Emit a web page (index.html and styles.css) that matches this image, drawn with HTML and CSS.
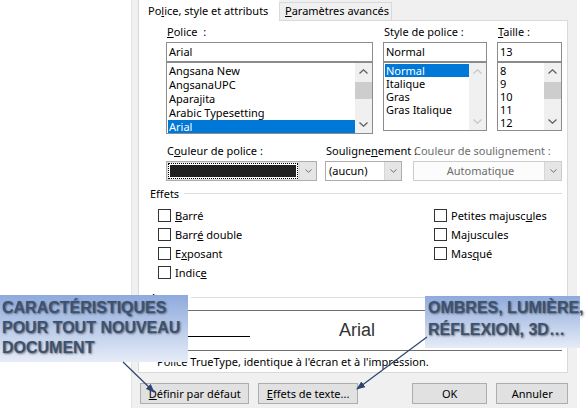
FILE: index.html
```html
<!DOCTYPE html>
<html lang="fr">
<head>
    <meta charset="UTF-8">
    <title>Police</title>
    <link rel="stylesheet" href="styles.css">
</head>
<body>
<div class="page">
    <div class="dialog">
        <div class="tabs">
            <div class="tab active">Po<u>l</u>ice, style et attributs</div>
            <div class="tab"><u>P</u>aramètres avancés</div>
        </div>

        <div class="panel">
            <div class="font-row">
                <div class="col col-font">
                    <span class="lbl"><u>P</u>olice&nbsp; :</span>
                    <div class="field">Arial</div>
                    <div class="list font-list">
                        <ul>
                            <li>Angsana New</li>
                            <li>AngsanaUPC</li>
                            <li>Aparajita</li>
                            <li>Arabic Typesetting</li>
                            <li class="sel">Arial</li>
                        </ul>
                        <div class="scroll">
                            <span class="arr"><svg width="9" height="5" viewBox="0 0 9 5"><path d="M0.5 4.5 L4.5 0.8 L8.5 4.5" fill="none" stroke="#606060" stroke-width="1.3"/></svg></span>
                            <span class="thumb"></span>
                            <span class="fill"></span>
                            <span class="arr"><svg width="9" height="5" viewBox="0 0 9 5"><path d="M0.5 0.5 L4.5 4.2 L8.5 0.5" fill="none" stroke="#606060" stroke-width="1.3"/></svg></span>
                        </div>
                    </div>
                </div>
                <div class="col col-style">
                    <span class="lbl">Style de police :</span>
                    <div class="field">Normal</div>
                    <div class="list short-list">
                        <ul>
                            <li class="sel">Normal</li>
                            <li>Italique</li>
                            <li>Gras</li>
                            <li>Gras Italique</li>
                        </ul>
                        <div class="scroll off">
                            <span class="arr"><svg width="9" height="5" viewBox="0 0 9 5"><path d="M0.5 4.5 L4.5 0.8 L8.5 4.5" fill="none" stroke="#c8c8c8" stroke-width="1.3"/></svg></span>
                            <span class="fill"></span>
                            <span class="arr"><svg width="9" height="5" viewBox="0 0 9 5"><path d="M0.5 0.5 L4.5 4.2 L8.5 0.5" fill="none" stroke="#c8c8c8" stroke-width="1.3"/></svg></span>
                        </div>
                    </div>
                </div>
                <div class="col col-size">
                    <span class="lbl"><u>T</u>aille :</span>
                    <div class="field">13</div>
                    <div class="list short-list">
                        <ul>
                            <li>8</li>
                            <li>9</li>
                            <li>10</li>
                            <li>11</li>
                            <li>12</li>
                        </ul>
                        <div class="scroll">
                            <span class="arr"><svg width="9" height="5" viewBox="0 0 9 5"><path d="M0.5 4.5 L4.5 0.8 L8.5 4.5" fill="none" stroke="#606060" stroke-width="1.3"/></svg></span>
                            <span class="thumb"></span>
                            <span class="fill"></span>
                            <span class="arr"><svg width="9" height="5" viewBox="0 0 9 5"><path d="M0.5 0.5 L4.5 4.2 L8.5 0.5" fill="none" stroke="#606060" stroke-width="1.3"/></svg></span>
                        </div>
                    </div>
                </div>
            </div>

            <div class="combo-row">
                <div class="cb cb-color">
                    <span class="lbl">C<u>o</u>uleur de police :</span>
                    <div class="combo grey">
                        <div class="focus"><div class="swatch"></div></div>
                        <span class="drop"><svg width="7" height="4" viewBox="0 0 7 4"><path d="M0.5 0.5 L3.5 3.3 L6.5 0.5" fill="none" stroke="#707070"/></svg></span>
                    </div>
                </div>
                <div class="cb cb-under">
                    <span class="lbl">Souligne<u>n</u>ement :</span>
                    <div class="combo">
                        <span class="val">(aucun)</span>
                        <span class="drop"><svg width="7" height="4" viewBox="0 0 7 4"><path d="M0.5 0.5 L3.5 3.3 L6.5 0.5" fill="none" stroke="#707070"/></svg></span>
                    </div>
                </div>
                <div class="cb cb-ucolor">
                    <span class="lbl dim">Couleur de soulignement :</span>
                    <div class="combo off">
                        <span class="val">Automatique</span>
                        <span class="drop"><svg width="7" height="4" viewBox="0 0 7 4"><path d="M0.5 0.5 L3.5 3.3 L6.5 0.5" fill="none" stroke="#707070"/></svg></span>
                    </div>
                </div>
            </div>

            <div class="group-title">Effets<span class="rule"></span></div>
            <div class="effects">
                <div class="fx-col">
                    <div class="fx"><span class="box"></span><span><u>B</u>arré</span></div>
                    <div class="fx"><span class="box"></span><span>Barr<u>é</u> double</span></div>
                    <div class="fx"><span class="box"></span><span>E<u>x</u>posant</span></div>
                    <div class="fx"><span class="box"></span><span>Indic<u>e</u></span></div>
                </div>
                <div class="fx-col">
                    <div class="fx"><span class="box"></span><span>Petites majusc<u>u</u>les</span></div>
                    <div class="fx"><span class="box"></span><span>Ma<u>j</u>uscules</span></div>
                    <div class="fx"><span class="box"></span><span>Mas<u>q</u>ué</span></div>
                </div>
            </div>

            <div class="group-title preview-title">Aperçu<span class="rule"></span></div>
            <div class="preview">Arial</div>
            <div class="note">Police TrueType, identique à l'écran et à l'impression.</div>
        </div>

        <div class="buttons">
            <button type="button" class="btn btn-default"><u>D</u>éfinir par défaut</button>
            <button type="button" class="btn btn-effects"><u>E</u>ffets de texte...</button>
            <button type="button" class="btn btn-ok">OK</button>
            <button type="button" class="btn btn-cancel">Annuler</button>
        </div>
    </div>

    <div class="callout callout-left">CARACTÉRISTIQUES<br>POUR TOUT NOUVEAU<br>DOCUMENT</div>
    <div class="callout callout-right">OMBRES, LUMIÈRE,<br>RÉFLEXION, 3D…</div>

    <svg class="arrows" width="587" height="412" viewBox="0 0 587 412">
        <defs>
            <marker id="head" markerWidth="9" markerHeight="7" refX="8" refY="3.5" orient="auto" markerUnits="userSpaceOnUse">
                <path d="M0 0 L9 3.5 L0 7 z" fill="#2c4470"/>
            </marker>
        </defs>
        <line x1="123" y1="362" x2="154" y2="392" stroke="#2c4470" stroke-width="1.2" marker-end="url(#head)"/>
        <line x1="427" y1="337" x2="357" y2="389" stroke="#2c4470" stroke-width="1.2" marker-end="url(#head)"/>
    </svg>
</div>
</body>
</html>
```

FILE: styles.css
```css
* {
    box-sizing: border-box;
}
body {
    margin: 0;
    background: #fff;
    font-family: "Noto Sans", "Segoe UI", sans-serif;
    font-size: 11px;
    color: #000;
}
u {
    text-decoration: underline;
    text-underline-offset: 1px;
}
.page {
    position: relative;
    width: 587px;
    height: 412px;
    overflow: hidden;
}

/* dialog frame */
.dialog {
    margin-left: 131px;
    width: 446px;
    height: 408px;
    background: #f0f0f0;
    border-left: 1px solid #e3e3e3;
    padding: 0 9px 0 6px;
}
.tabs {
    display: flex;
    height: 20px;
}
.tab {
    width: 113px;
    height: 18px;
    margin-top: 2px;
    padding-left: 5px;
    line-height: 16px;
    border: 1px solid #d9d9d9;
    border-bottom: 0;
    white-space: nowrap;
}
.tab.active {
    position: relative;
    z-index: 1;
    width: 141px;
    height: 22px;
    margin-top: -1px;
    padding: 3px 0 0 9px;
    background: #fff;
    border-right: 0;
}
.panel {
    height: 353px;
    background: #fff;
    border: 1px solid #d9d9d9;
    padding: 4px 5px 0 27px;
}

/* font / style / size */
.font-row {
    display: flex;
    gap: 10px;
}
.col-font { width: 207px; }
.col-style { width: 104px; }
.col-size { width: 65px; }
.lbl {
    display: block;
    height: 14px;
    line-height: 14px;
    margin-bottom: 3px;
    padding-left: 1px;
    white-space: nowrap;
}
.lbl.dim {
    color: #6d6d6d;
}
.field {
    height: 20px;
    border: 1px solid #8c8c8c;
    padding-left: 2px;
    line-height: 18px;
}
.list {
    display: flex;
    height: 72px;
    border: 1px solid #8c8c8c;
}
.short-list {
    height: 69px;
}
.list ul {
    flex: 1;
    margin: 0;
    padding: 1px 0 0 1px;
    list-style: none;
    overflow: hidden;
}
.list li {
    height: 14px;
    line-height: 14px;
    padding-left: 1px;
    white-space: nowrap;
}
.short-list li {
    height: 13px;
    line-height: 13px;
}
.list li.sel {
    background: #0078d7;
    color: #fff;
}
.scroll {
    width: 17px;
    display: flex;
    flex-direction: column;
    background: #f0f0f0;
}
.arr {
    height: 17px;
    display: flex;
    align-items: center;
    justify-content: center;
}
.thumb {
    height: 17px;
    margin-top: 2px;
    background: #cdcdcd;
}
.fill {
    flex: 1;
}

/* colour / underline combos */
.combo-row {
    display: flex;
    margin-top: 10px;
}
.cb-color { width: 151px; }
.cb-under { width: 77px; margin-left: 8px; }
.cb-ucolor { width: 149px; margin-left: 11px; }
.combo {
    display: flex;
    height: 20px;
    border: 1px solid #adadad;
    background: #fff;
}
.combo.grey {
    background: #e1e1e1;
}
.combo.off {
    border-color: #cccccc;
    background: #fcfcfc;
    color: #6d6d6d;
}
.combo .val {
    flex: 1;
    padding-left: 3px;
    line-height: 18px;
}
.combo.off .val {
    text-align: center;
}
.focus {
    flex: 1;
    margin: 1px;
    border: 1px dotted #000;
    padding: 1px;
    background: #fff;
}
.swatch {
    height: 100%;
    background: #222;
}
.drop {
    width: 17px;
    display: flex;
    align-items: center;
    justify-content: center;
    background: #e5e5e5;
    border-left: 1px solid #d6d6d6;
}

/* effects */
.group-title {
    display: flex;
    align-items: center;
    height: 14px;
    margin: 5px 0 0 -16px;
}
.rule {
    flex: 1;
    height: 1px;
    margin-left: 5px;
    background: #dcdcdc;
}
.effects {
    display: flex;
    margin: 6px 0 0 -8px;
}
.fx-col:first-child {
    width: 276px;
}
.fx {
    display: flex;
    align-items: center;
    height: 19px;
    white-space: nowrap;
}
.box {
    width: 13px;
    height: 13px;
    border: 1px solid #333;
    background: #fff;
    margin-right: 4px;
}

/* preview */
.preview-title {
    margin-top: 8px;
}
.preview {
    position: relative;
    height: 41px;
    margin: 6px 0 0 -14px;
    border-top: 1px solid #6e6e6e;
    border-bottom: 1px solid #6e6e6e;
    text-align: center;
    line-height: 38px;
    font-family: "Liberation Sans", Arial, sans-serif;
    font-size: 18px;
    color: #333;
}
.preview::before {
    content: "";
    position: absolute;
    left: 8px;
    top: 25px;
    width: 90px;
    border-top: 1px solid #000;
}
.note {
    height: 14px;
    line-height: 14px;
    margin: 4px 0 0 -9px;
}

/* bottom buttons */
.buttons {
    display: flex;
    margin-top: 10px;
    padding-left: 2px;
}
.btn {
    height: 21px;
    padding: 0;
    border: 1px solid #adadad;
    background: #e1e1e1;
    font-family: inherit;
    font-size: 11px;
    color: #000;
    line-height: 19px;
}
.btn-default { width: 110px; }
.btn-effects { width: 100px; margin-left: 9px; }
.btn-ok { width: 76px; margin-left: 54px; }
.btn-cancel { width: 72px; margin-left: 9px; }

/* annotations */
.callout {
    position: absolute;
    background: linear-gradient(to bottom, #8eaadc, #e6ecf7);
    font-family: "Liberation Sans", Arial, sans-serif;
    font-weight: bold;
    font-size: 16px;
    color: #3d5170;
    text-shadow: 1px 1px 2px rgba(0, 0, 0, 0.5);
    white-space: nowrap;
}
.callout-left {
    left: 0;
    top: 295px;
    width: 188px;
    height: 67px;
    padding: 3px 0 0 2px;
    line-height: 20px;
}
.callout-right {
    left: 425px;
    top: 296px;
    width: 155px;
    height: 52px;
    padding: 1px 0 0 3px;
    line-height: 22px;
}
.arrows {
    position: absolute;
    left: 0;
    top: 0;
    pointer-events: none;
}
```
